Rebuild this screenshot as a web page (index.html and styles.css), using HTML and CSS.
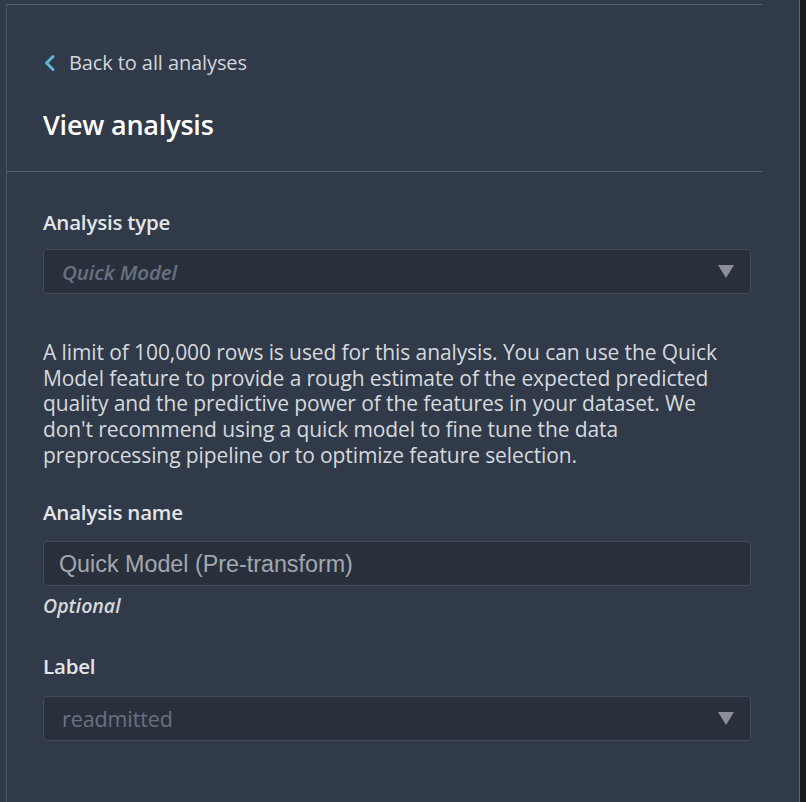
FILE: index.html
```html
<!DOCTYPE html>
<html>
<head>
<meta charset="utf-8">
<link rel="stylesheet" href="styles.css">
</head>
<body>
<div class="frame">
  <div class="panel">
    <div class="header">
      <a class="back" href="#">
        <svg class="chev" width="12" height="18" viewBox="0 0 12 18"><path d="M10 2.5 L3.5 9 L10 15.5" fill="none" stroke="#5bb8d3" stroke-width="3" stroke-linecap="round" stroke-linejoin="round"/></svg>
        <span>Back to all analyses</span>
      </a>
      <h1 class="title">View analysis</h1>
    </div>
    <div class="form">
      <div class="label first">Analysis type</div>
      <div class="select">
        <span class="placeholder italic">Quick Model</span>
        <span class="caret"></span>
      </div>
      <p class="desc">A limit of 100,000 rows is used for this analysis. You can use the Quick Model feature to provide a rough estimate of the expected predicted quality and the predictive power of the features in your dataset. We don't recommend using a quick model to fine tune the data preprocessing pipeline or to optimize feature selection.</p>
      <div class="label name-label">Analysis name</div>
      <div class="input"><span class="input-text">Quick Model (Pre-transform)</span></div>
      <div class="hint">Optional</div>
      <div class="label label3">Label</div>
      <div class="select">
        <span class="placeholder">readmitted</span>
        <span class="caret"></span>
      </div>
    </div>
  </div>
  <div class="strip"></div>
</div>
</body>
</html>
```
FILE: styles.css
```css
html, body {
  margin: 0;
  padding: 0;
  background: #313a48;
  height: 100%;
}
body {
  font-family: "Open Sans", "Noto Sans", sans-serif;
  color: #d5d9de;
}
.frame {
  display: flex;
  height: 802px;
  overflow: hidden;
}
.panel {
  width: 792px;
  margin-left: 6px;
  margin-top: 4px;
  border-left: 1px solid #4d5562;
}
.strip {
  width: 6px;
  border-left: 1px solid #5b636e;
  background: #16191d;
}
.header {
  width: 755px;
  border-top: 1px solid #5b636e;
  border-bottom: 1px solid #5b636e;
  padding: 46px 0 0 36px;
  box-sizing: border-box;
  height: 168px;
}
.back {
  display: flex;
  align-items: center;
  gap: 14px;
  text-decoration: none;
  color: #d2d6db;
  font-size: 20px;
  line-height: 24px;
  height: 24px;
  letter-spacing: -0.1px;
}
.chev {
  display: block;
}
.title {
  margin: 34px 0 0 0;
  font-size: 27px;
  line-height: 32px;
  font-weight: 600;
  color: #ffffff;
  letter-spacing: -0.2px;
}
.form {
  padding: 0 0 0 36px;
  width: 744px;
  box-sizing: border-box;
}
.label {
  font-size: 20.5px;
  line-height: 24px;
  font-weight: 600;
  color: #e3e6e9;
  margin-bottom: 15px;
  letter-spacing: -0.2px;
}
.label.first {
  margin-top: 38px;
}
.name-label {
  margin-top: 31px;
  margin-bottom: 17px;
}
.label3 {
  margin-top: 36px;
  margin-bottom: 18px;
}
.select, .input {
  height: 45px;
  box-sizing: border-box;
  border: 1px solid #434b58;
  border-radius: 4px;
  background: #29303c;
  display: flex;
  align-items: center;
  justify-content: space-between;
  padding: 0 16px 0 18px;
}
.placeholder {
  font-size: 21.5px;
  color: #687180;
  letter-spacing: -0.1px;
}
.italic {
  font-style: italic;
  font-weight: 600;
  font-size: 20.5px;
}
.caret {
  width: 0;
  height: 0;
  border-left: 8px solid transparent;
  border-right: 8px solid transparent;
  border-top: 13px solid #8b9098;
}
.desc {
  margin: 46px 0 0 0;
  font-size: 21px;
  line-height: 25.7px;
  color: #d5d9de;
  letter-spacing: -0.1px;
}
.input {
  padding-left: 15px;
}
.input-text {
  font-family: "Liberation Sans", Arial, sans-serif;
  font-size: 23.3px;
  color: #a2a8b0;
  padding-top: 3px;
}
.hint {
  font-style: italic;
  font-weight: 600;
  font-size: 19.5px;
  line-height: 24px;
  color: #d5d9de;
  margin-top: 8px;
}
```
